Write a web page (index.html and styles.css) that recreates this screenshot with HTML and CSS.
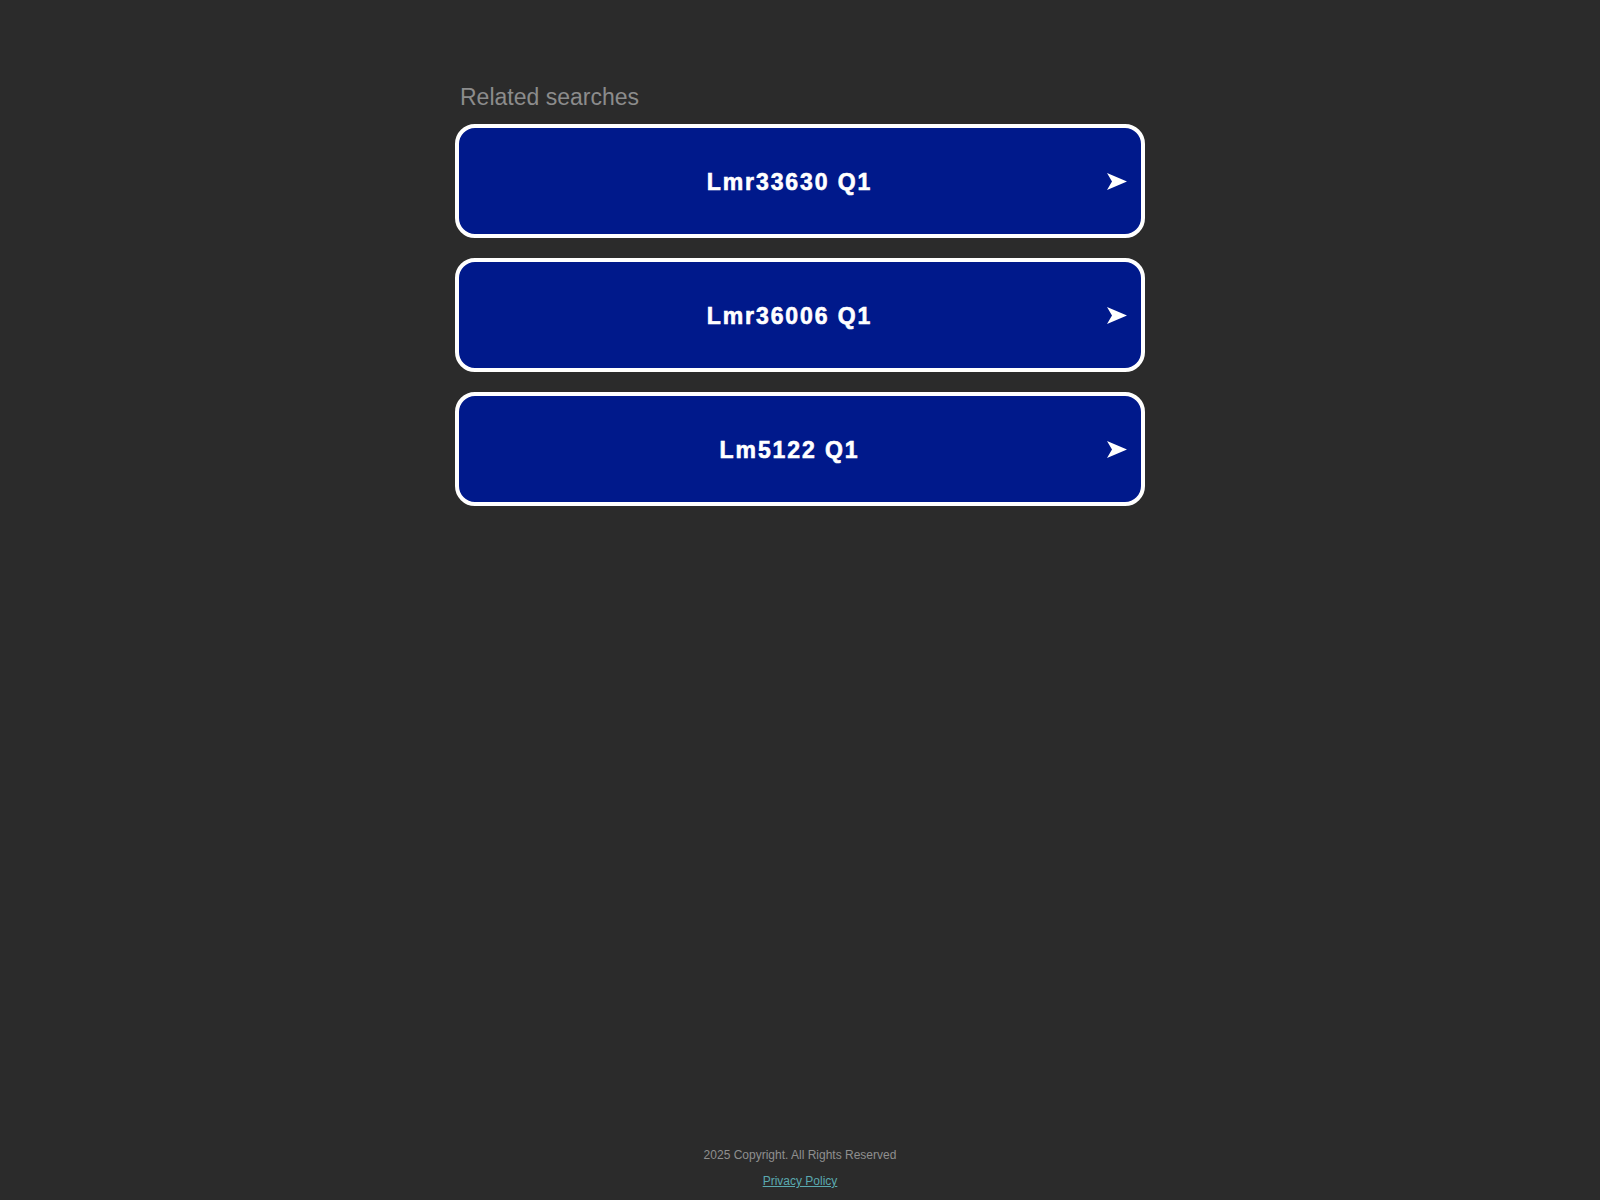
FILE: index.html
```html
<!DOCTYPE html>
<html lang="en">
<head>
<meta charset="utf-8">
<title>Related searches</title>
<link rel="stylesheet" href="styles.css">
</head>
<body>
<main class="page">
  <section class="related">
    <h2 class="related-title">Related searches</h2>
    <ul class="link-list">
      <li><a class="link-btn" href="#"><span class="link-label">Lmr33630 Q1</span><svg class="link-arrow" viewBox="0 0 20 17" aria-hidden="true"><polygon points="0,0 20,8.5 0,17 5,8.5"/></svg></a></li>
      <li><a class="link-btn" href="#"><span class="link-label">Lmr36006 Q1</span><svg class="link-arrow" viewBox="0 0 20 17" aria-hidden="true"><polygon points="0,0 20,8.5 0,17 5,8.5"/></svg></a></li>
      <li><a class="link-btn" href="#"><span class="link-label">Lm5122 Q1</span><svg class="link-arrow" viewBox="0 0 20 17" aria-hidden="true"><polygon points="0,0 20,8.5 0,17 5,8.5"/></svg></a></li>
    </ul>
  </section>
  <footer class="site-footer">
    <p class="copyright">2025 Copyright. All Rights Reserved</p>
    <a class="privacy" href="#">Privacy Policy</a>
  </footer>
</main>
</body>
</html>
```

FILE: styles.css
```css
html, body {
  margin: 0;
  padding: 0;
}

body {
  background: #2b2b2b;
  font-family: "Liberation Sans", Arial, sans-serif;
}

.page {
  min-height: 100vh;
  display: flex;
  flex-direction: column;
}

.related {
  width: 690px;
  margin: 0 auto;
  padding-top: 85px;
}

.related-title {
  margin: 0 0 14px;
  padding-left: 5px;
  font-size: 23px;
  font-weight: normal;
  line-height: 25px;
  color: #8c8c8c;
}

.link-list {
  list-style: none;
  margin: 0;
  padding: 0;
  display: flex;
  flex-direction: column;
  gap: 20px;
}

.link-btn {
  box-sizing: border-box;
  height: 114px;
  display: flex;
  align-items: center;
  background: #00198b;
  border: 4px solid #ffffff;
  border-radius: 20px;
  text-decoration: none;
  color: #ffffff;
}

.link-label {
  flex: 1;
  padding-left: 13px;
  text-align: center;
  font-size: 23px;
  font-weight: bold;
  letter-spacing: 1.9px;
  -webkit-text-stroke: 0.6px #ffffff;
  line-height: 26px;
  padding-top: 1px;
}

.link-arrow {
  width: 20px;
  height: 17px;
  margin-right: 14px;
  margin-top: 1px;
  fill: #ffffff;
  flex: none;
}

.site-footer {
  margin-top: auto;
  padding-bottom: 12px;
  text-align: center;
  font-size: 12px;
  line-height: 14px;
}

.copyright {
  margin: 0 0 12px;
  color: #8f8f8f;
}

.privacy {
  color: #5aa9b0;
  text-decoration: underline;
}
```
